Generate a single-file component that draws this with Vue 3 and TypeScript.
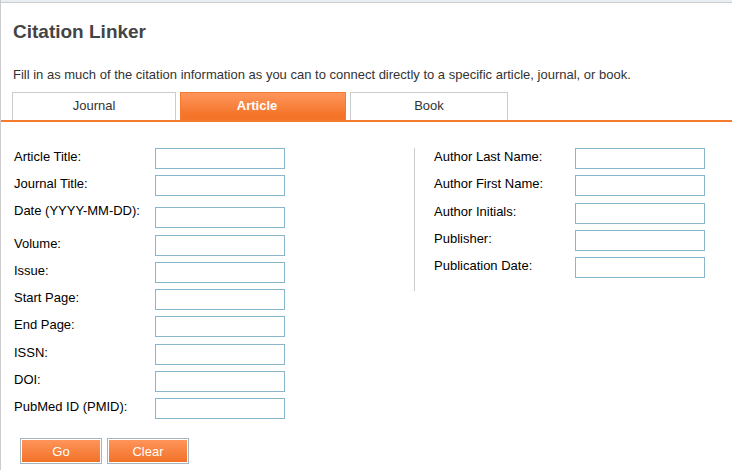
<script setup lang="ts">
import { ref } from 'vue'

interface Field {
  id: string
  label: string
  low?: boolean
}

const tabs = ['Journal', 'Article', 'Book']
const activeTab = ref('Article')

const citationFields: Field[] = [
  { id: 'article-title', label: 'Article Title:' },
  { id: 'journal-title', label: 'Journal Title:' },
  { id: 'date', label: 'Date (YYYY-MM-DD):', low: true },
  { id: 'volume', label: 'Volume:' },
  { id: 'issue', label: 'Issue:' },
  { id: 'start-page', label: 'Start Page:' },
  { id: 'end-page', label: 'End Page:' },
  { id: 'issn', label: 'ISSN:' },
  { id: 'doi', label: 'DOI:' },
  { id: 'pmid', label: 'PubMed ID (PMID):' },
]

const authorFields: Field[] = [
  { id: 'author-last', label: 'Author Last Name:' },
  { id: 'author-first', label: 'Author First Name:' },
  { id: 'author-initials', label: 'Author Initials:' },
  { id: 'publisher', label: 'Publisher:' },
  { id: 'publication-date', label: 'Publication Date:' },
]
</script>

<template>
  <main class="page">
    <header class="intro">
      <h1>Citation Linker</h1>
      <p>Fill in as much of the citation information as you can to connect directly to a specific article, journal, or book.</p>
    </header>
    <nav class="tabs">
      <button
        v-for="tab in tabs"
        :key="tab"
        type="button"
        class="tab"
        :class="[tab.toLowerCase(), { active: tab === activeTab }]"
        @click="activeTab = tab"
      >{{ tab }}</button>
    </nav>
    <form @submit.prevent>
      <div class="columns">
        <div class="fields citation">
          <div v-for="f in citationFields" :key="f.id" class="field" :class="{ low: f.low }">
            <label :for="f.id">{{ f.label }}</label>
            <input :id="f.id" type="text" />
          </div>
        </div>
        <div class="side">
          <div class="fields author">
            <div v-for="f in authorFields" :key="f.id" class="field">
              <label :for="f.id">{{ f.label }}</label>
              <input :id="f.id" type="text" />
            </div>
          </div>
        </div>
      </div>
      <div class="actions">
        <button type="submit">Go</button>
        <button type="reset">Clear</button>
      </div>
    </form>
  </main>
</template>

<style>
body {
  background: #fff;
}
</style>

<style scoped>
.page,
.page button,
.page input {
  box-sizing: border-box;
  font-family: "Liberation Sans", Arial, sans-serif;
  font-size: 13px;
}
.page {
  min-height: 100vh;
  border-left: 1px solid #ccc;
  background: linear-gradient(#e9eef2 0 2px, #ccc 2px 3px, #fff 3px);
  color: #000;
}
.intro {
  padding: 20px 12px 9px;
  color: #444;
}
h1 {
  margin: 0 0 23px;
  font-size: 19px;
  line-height: 23px;
}
p {
  margin: 0;
  line-height: 17px;
  color: #333;
}
.tabs {
  display: flex;
  gap: 4px;
  padding-left: 11px;
  border-bottom: 2px solid #f47a30;
}
.tab {
  width: 164px;
  height: 28px;
  padding: 0 0 2px;
  border: 1px solid #ccc;
  border-bottom: 0;
  background: #fff;
  color: #333;
}
.tab.article {
  width: 166px;
  padding-right: 12px;
}
.tab.book {
  width: 158px;
}
.tab.active {
  border-color: #f47a30;
  background: linear-gradient(#ff965c, #f4752a 80%);
  color: #fff;
  font-weight: bold;
}
form {
  padding: 26px 13px 6px;
}
.columns {
  display: grid;
  grid-template-columns: minmax(285px, 400px) 1fr;
  align-items: start;
}
.fields {
  display: flex;
  flex-direction: column;
  justify-content: space-between;
}
.citation {
  min-height: 271px;
}
.author {
  min-height: 130px;
}
.side {
  padding: 0 0 13px 19px;
  border-left: 1px solid #ccc;
}
.field {
  display: grid;
  grid-template-columns: 141px 130px;
  align-items: start;
}
.field.low {
  height: 26px;
}
.field.low input {
  align-self: end;
}
label {
  line-height: 17px;
  white-space: nowrap;
}
input {
  width: 100%;
  height: 21px;
  padding: 1px 4px;
  border: 1px solid #8ab6cd;
  border-radius: 0;
  background: #fff;
}
.actions {
  display: flex;
  gap: 5px;
  padding: 19px 6px 0;
}
.actions button {
  width: 82px;
  height: 26px;
  padding: 0;
  border: 1px solid #a5b5c0;
  background: linear-gradient(#ff965c, #f27026);
  box-shadow: inset 0 0 0 1px #fff;
  color: #fff;
}
</style>
